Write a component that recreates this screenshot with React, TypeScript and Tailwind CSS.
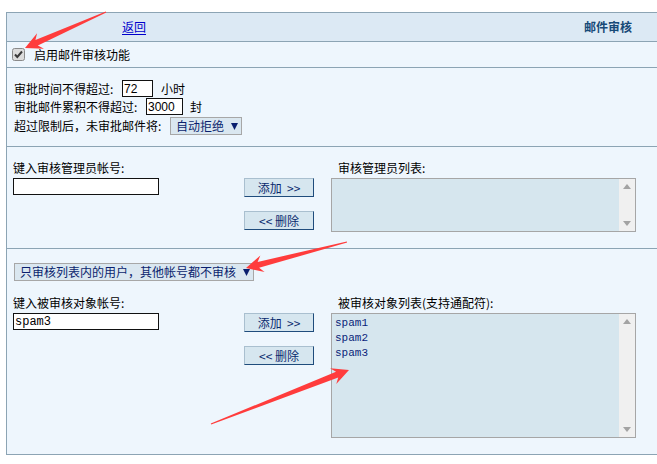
import React from 'react';

const cjk = { fontFamily: '"Noto Sans CJK SC", "Liberation Sans", sans-serif' };

type Pt = [number, number];

// tapered annotation arrow, tail -> tip
const arrowPoints = (t: Pt, p: Pt) => {
  const dx = p[0] - t[0];
  const dy = p[1] - t[1];
  const len = Math.hypot(dx, dy);
  const ux = dx / len;
  const uy = dy / len;
  const nx = -uy;
  const ny = ux;
  const L = 17;
  const W = 8.5;
  const w = 3;
  const bx = p[0] - ux * L;
  const by = p[1] - uy * L;
  const nbx = p[0] - ux * L * 0.75;
  const nby = p[1] - uy * L * 0.75;
  const pts: Pt[] = [
    [t[0] + nx * 0.6, t[1] + ny * 0.6],
    [nbx + nx * w, nby + ny * w],
    [bx + nx * W, by + ny * W],
    p,
    [bx - nx * W, by - ny * W],
    [nbx - nx * w, nby - ny * w],
    [t[0] - nx * 0.6, t[1] - ny * 0.6],
  ];
  return pts.map((q) => q.join(',')).join(' ');
};

const Btn = ({ children }: { children: React.ReactNode }) => (
  <div
    className="w-[70px] h-[19px] flex items-center justify-center bg-[#d6e6ef] border border-t-[#a9bfcf] border-l-[#a9bfcf] border-b-[#1f4c7c] border-r-[#1f4c7c] text-[12px] text-[#0a2a6e] leading-none"
    style={cjk}
  >
    {children}
  </div>
);

const ListBox = ({ h, items }: { h: string; items: string[] }) => (
  <div className={`w-[305px] ${h} flex border border-[#a6a6a6] bg-[#d6e6ee]`}>
    <div className="flex-1 pl-[3px] pt-[2px] flex flex-col">
      {items.map((s) => (
        <div key={s} className="h-[15px] text-[11px] leading-[15px] text-[#0a1f7a]" style={{ fontFamily: '"Liberation Mono", monospace' }}>
          {s}
        </div>
      ))}
    </div>
    <div className="w-[16px] bg-[#f0f0f0] flex flex-col items-center justify-between py-[5px]">
      <svg width="8" height="5" viewBox="0 0 8 5"><polygon points="4,0 8,5 0,5" fill="#a3a3a3" /></svg>
      <svg width="8" height="5" viewBox="0 0 8 5"><polygon points="0,0 8,0 4,5" fill="#a3a3a3" /></svg>
    </div>
  </div>
);

const TextIn = ({ w, value, mono }: { w: string; value?: string; mono?: boolean }) => (
  <div
    className={`${w} h-[17px] bg-white border border-[#111] flex items-center pl-[1px] text-[12px] leading-none text-black`}
    style={mono ? { fontFamily: '"Liberation Mono", monospace' } : { fontFamily: '"Liberation Sans", sans-serif' }}
  >
    {value}
  </div>
);

const Caret = () => (
  <svg width="7" height="7" viewBox="0 0 7 7" className="ml-[7px]">
    <polygon points="0,0 7,0 3.5,7" fill="#0a1f6e" />
  </svg>
);

export default function App() {
  return (
    <div className="relative w-[657px] h-[464px] bg-white overflow-hidden text-[12px] text-black" style={cjk}>
      <div className="pt-[12px] pl-[6px]">
        <div className="w-[651px] border-l border-t border-[#8ca4b4] bg-[#eef6fd]">
          {/* header */}
          <div className="h-[29px] bg-[#dce9f4] border-b border-[#8ca4b4] flex items-center justify-between pl-[115px] pr-[25px]">
            <span className="text-[#0000cc] underline underline-offset-2">返回</span>
            <span className="font-bold text-[#174a78]">邮件审核</span>
          </div>

          {/* enable */}
          <div className="h-[26px] border-b border-[#8ca4b4] flex items-center pl-[5px]">
            <svg width="13" height="13" viewBox="0 0 13 13">
              <rect x="0.5" y="0.5" width="12" height="12" rx="2" fill="#dcdcdc" stroke="#8a8a8a" />
              <path d="M3 6.5 L5.3 9 L10 3.5" fill="none" stroke="#3a3a3a" strokeWidth="2" />
            </svg>
            <span className="ml-[9px]">启用邮件审核功能</span>
          </div>

          {/* limits */}
          <div className="h-[79px] border-b border-[#8ca4b4] pl-[7px] pt-[12px] flex flex-col gap-[1px]">
            <div className="flex items-center h-[17px]">
              <span className="w-[108px]">审批时间不得超过:</span>
              <TextIn w="w-[31px]" value="72" />
              <span className="ml-[8px]">小时</span>
            </div>
            <div className="flex items-center h-[17px]">
              <span className="w-[132px]">审批邮件累积不得超过:</span>
              <TextIn w="w-[37px]" value="3000" />
              <span className="ml-[7px]">封</span>
            </div>
            <div className="flex items-center h-[18px] mt-[1px]">
              <span className="w-[156px]">超过限制后，未审批邮件将:</span>
              <div className="w-[72px] h-[18px] bg-[#dae7f0] border border-[#a7a7a7] flex items-center pl-[5px] text-[#0a1f6e]">
                自动拒绝
                <Caret />
              </div>
            </div>
          </div>

          {/* admins */}
          <div className="h-[102px] border-b border-[#8ca4b4] flex pl-[6px] pt-[14px]">
            <div className="w-[231px] flex flex-col">
              <span className="h-[17px] leading-[14px]">键入审核管理员帐号:</span>
              <TextIn w="w-[146px]" />
            </div>
            <div className="w-[87px] flex flex-col gap-[14px] pt-[17px]">
              <Btn>添加&nbsp;&nbsp;&gt;&gt;</Btn>
              <Btn>&lt;&lt;&nbsp;删除</Btn>
            </div>
            <div className="flex flex-col">
              <span className="h-[17px] leading-[14px] pl-[7px]">审核管理员列表:</span>
              <ListBox h="h-[54px]" items={[]} />
            </div>
          </div>

          {/* targets */}
          <div className="h-[206px] border-b border-[#8ca4b4] pl-[6px] pt-[14px]">
            <div className="w-[240px] h-[18px] bg-[#dae7f0] border border-[#a7a7a7] flex items-center pl-[5px] ml-[1px] text-[#0a1f6e]">
              只审核列表内的用户，其他帐号都不审核
              <Caret />
            </div>
            <div className="flex mt-[15px]">
              <div className="w-[231px] flex flex-col">
                <span className="h-[17px] leading-[14px]">键入被审核对象帐号:</span>
                <TextIn w="w-[146px]" value="spam3" mono />
              </div>
              <div className="w-[87px] flex flex-col gap-[14px] pt-[17px]">
                <Btn>添加&nbsp;&nbsp;&gt;&gt;</Btn>
                <Btn>&lt;&lt;&nbsp;删除</Btn>
              </div>
              <div className="flex flex-col">
                <span className="h-[17px] leading-[14px] pl-[7px]">被审核对象列表(支持通配符):</span>
                <ListBox h="h-[125px]" items={['spam1', 'spam2', 'spam3']} />
              </div>
            </div>
          </div>
        </div>
      </div>

      {/* annotation arrows */}
      <svg className="absolute inset-0 pointer-events-none" width="657" height="464">
        <polygon points={arrowPoints([106, 12], [25, 48])} fill="#ff3c3c" />
        <polygon points={arrowPoints([347, 242], [246, 268])} fill="#ff3c3c" />
        <polygon points={arrowPoints([211, 424], [349, 370])} fill="#ff3c3c" />
      </svg>
    </div>
  );
}
